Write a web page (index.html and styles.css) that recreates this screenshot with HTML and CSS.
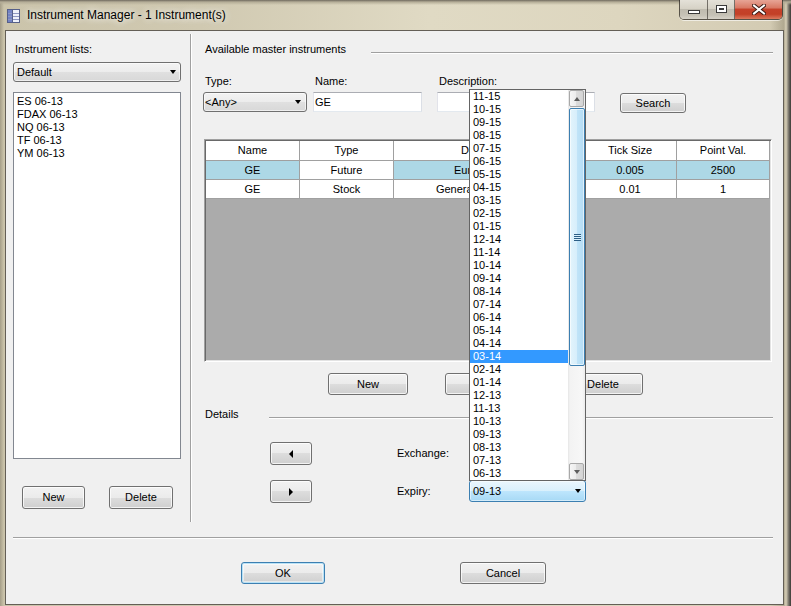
FILE: index.html
```html
<!DOCTYPE html>
<html>
<head>
<meta charset="utf-8">
<title>Instrument Manager</title>
<link rel="stylesheet" href="styles.css">
</head>
<body>
<div class="window">
  <div class="titlebar">
    <svg class="appicon" width="13" height="14" viewBox="0 0 13 14">
      <rect x="0.5" y="0.5" width="12" height="13" fill="#eef1fa" stroke="#56608a"/>
      <rect x="1" y="1" width="4" height="12" fill="#7383c4"/>
      <path d="M1 4.5H12M1 7.5H12M1 10.5H12" stroke="#8d97c2"/>
      <path d="M5.5 1V13" stroke="#56608a"/>
    </svg>
    <span class="title">Instrument Manager - 1 Instrument(s)</span>
    <div class="caption-btns">
      <div class="cbtn cmin">
        <svg width="14" height="6" viewBox="0 0 14 6"><rect x="1.5" y="1.5" width="11" height="3" fill="#fff" stroke="#3a3a3a"/></svg>
      </div>
      <div class="cbtn cmax">
        <svg width="13" height="10" viewBox="0 0 13 10"><rect x="1.5" y="1.5" width="10" height="7" fill="#fff" stroke="#3a3a3a"/><rect x="4" y="4" width="5" height="2" fill="#3a3a3a"/></svg>
      </div>
      <div class="cbtn cclose">
        <svg width="14" height="11" viewBox="0 0 14 11"><path d="M2 1.5L12 9.5M12 1.5L2 9.5" stroke="#3d1a14" stroke-width="4" stroke-linecap="square"/><path d="M2 1.5L12 9.5M12 1.5L2 9.5" stroke="#fff" stroke-width="2" stroke-linecap="square"/></svg>
      </div>
    </div>
  </div>

  <div class="client">
    <div class="main">
      <div class="left">
        <div class="label">Instrument lists:</div>
        <div class="combo combo-default"><span>Default</span><i class="arrow"></i></div>
        <div class="listbox">
          <div class="li">ES 06-13</div>
          <div class="li">FDAX 06-13</div>
          <div class="li">NQ 06-13</div>
          <div class="li">TF 06-13</div>
          <div class="li">YM 06-13</div>
        </div>
        <div class="left-btns">
          <button class="btn b-lnew">New</button>
          <button class="btn b-ldel">Delete</button>
        </div>
      </div>
      <div class="vsep"></div>
      <div class="right">
        <div class="ghead"><span class="gtitle">Available master instruments</span><span class="gline"></span></div>
        <div class="form">
          <div class="fcol c-type">
            <div class="flabel">Type:</div>
            <div class="combo combo-type"><span>&lt;Any&gt;</span><i class="arrow"></i></div>
          </div>
          <div class="fcol c-name">
            <div class="flabel">Name:</div>
            <div class="textbox">GE</div>
          </div>
          <div class="fcol c-desc">
            <div class="flabel">Description:</div>
            <div class="textbox"></div>
          </div>
          <button class="btn b-search">Search</button>
        </div>

        <div class="grid">
          <div class="grow ghdr">
            <div class="cell">Name</div>
            <div class="cell">Type</div>
            <div class="cell">Description</div>
            <div class="cell">Tick Size</div>
            <div class="cell">Point Val.</div>
          </div>
          <div class="grow">
            <div class="cell hl">GE</div>
            <div class="cell">Future</div>
            <div class="cell hl">Eurodollar Fut</div>
            <div class="cell hl">0.005</div>
            <div class="cell hl">2500</div>
          </div>
          <div class="grow">
            <div class="cell">GE</div>
            <div class="cell">Stock</div>
            <div class="cell">General Electric Corp</div>
            <div class="cell">0.01</div>
            <div class="cell">1</div>
          </div>
        </div>

        <div class="gbtns">
          <button class="btn b-g">New</button>
          <button class="btn b-g">Edit</button>
          <button class="btn b-g b-gdel">Delete</button>
        </div>

        <div class="ghead dhead"><span class="gtitle dtitle">Details</span><span class="gline"></span></div>
        <div class="details">
          <button class="btn b-arrow"><i class="tri-left"></i></button>
          <div class="dlabel">Exchange:</div>
          <div class="combo combo-exch"><span></span><i class="arrow"></i></div>
          <button class="btn b-arrow"><i class="tri-right"></i></button>
          <div class="dlabel">Expiry:</div>
          <div class="combo combo-focus"><span>09-13</span><i class="arrow"></i></div>
        </div>
      </div>
    </div>
    <div class="hsep"></div>
    <div class="footer">
      <button class="btn b-ok">OK</button>
      <button class="btn b-cancel">Cancel</button>
    </div>
  </div>

  <div class="dropdown">
    <div class="ddlist">
      <div class="ddi">11-15</div>
      <div class="ddi">10-15</div>
      <div class="ddi">09-15</div>
      <div class="ddi">08-15</div>
      <div class="ddi">07-15</div>
      <div class="ddi">06-15</div>
      <div class="ddi">05-15</div>
      <div class="ddi">04-15</div>
      <div class="ddi">03-15</div>
      <div class="ddi">02-15</div>
      <div class="ddi">01-15</div>
      <div class="ddi">12-14</div>
      <div class="ddi">11-14</div>
      <div class="ddi">10-14</div>
      <div class="ddi">09-14</div>
      <div class="ddi">08-14</div>
      <div class="ddi">07-14</div>
      <div class="ddi">06-14</div>
      <div class="ddi">05-14</div>
      <div class="ddi">04-14</div>
      <div class="ddi on">03-14</div>
      <div class="ddi">02-14</div>
      <div class="ddi">01-14</div>
      <div class="ddi">12-13</div>
      <div class="ddi">11-13</div>
      <div class="ddi">10-13</div>
      <div class="ddi">09-13</div>
      <div class="ddi">08-13</div>
      <div class="ddi">07-13</div>
      <div class="ddi">06-13</div>
    </div>
    <div class="ddscroll">
      <div class="sbtn"><i class="sup"></i></div>
      <div class="thumb"><i class="grip"></i></div>
      <div class="strack"></div>
      <div class="sbtn"><i class="sdown"></i></div>
    </div>
  </div>
</div>
</body>
</html>
```

FILE: styles.css
```css
* { box-sizing: border-box; }

body {
  margin: 0;
  width: 791px;
  height: 606px;
  overflow: hidden;
  background: #c9c2a9;
  font-family: "Liberation Sans", Arial, sans-serif;
  font-size: 11px;
  color: #000;
}

/* shared controls */
.btn {
  padding: 0;
  font-family: "Liberation Sans", Arial, sans-serif;
  font-size: 11px;
  color: #000;
  border: 1px solid #707070;
  border-radius: 3px;
  background: linear-gradient(#f2f2f2 0%, #ebebeb 50%, #dddddd 50%, #cfcfcf 100%);
  box-shadow: inset 0 0 0 1px rgba(255,255,255,0.75);
  display: flex;
  align-items: center;
  justify-content: center;
  line-height: 13px;
}
.combo {
  height: 20px;
  border: 1px solid #707070;
  border-radius: 3px;
  background: linear-gradient(#f3f3f3 0%, #ececec 50%, #e0e0e0 50%, #d8d8d8 100%);
  box-shadow: inset 0 0 0 1px rgba(255,255,255,0.6);
  display: flex;
  align-items: center;
  padding-left: 3px;
  white-space: nowrap;
}
.arrow {
  margin-left: auto;
  margin-right: 4px;
  width: 0;
  height: 0;
  border-left: 3.5px solid transparent;
  border-right: 3.5px solid transparent;
  border-top: 4px solid #000;
}
.textbox {
  height: 20px;
  border: 1px solid;
  border-color: #abadb3 #dbdfe6 #e3e9ef #e2e3ea;
  background: #fff;
  padding-left: 1px;
  line-height: 18px;
}

.window {
  position: relative;
  width: 791px;
  height: 606px;
  display: flex;
  flex-direction: column;
  background:
    linear-gradient(#6f6a5e 0, #b4ad97 2px, rgba(0,0,0,0) 5px),
    linear-gradient(90deg, #a59e88 0, #cbc4ab 4px, #d0c9b1 200px, #e0dac4 430px, #ddd6bf 620px, #d3cbb3 770px, #b0a890 784px, #d8d0b8 786px, #6e6a62 789px, #3c3a36 791px);
}

/* ---------- title bar ---------- */
.titlebar {
  height: 30px;
  display: flex;
  align-items: flex-start;
  padding: 0 8px 0 7px;
  flex-shrink: 0;
}
.appicon { margin-top: 9px; flex-shrink: 0; }
.title {
  margin-left: 7px;
  margin-top: 8px;
  font-size: 12px;
  line-height: 14px;
  white-space: nowrap;
  color: #000;
  text-shadow: 0 0 6px rgba(255,255,255,0.9), 0 0 10px rgba(255,255,255,0.7);
}
.caption-btns {
  margin-left: auto;
  display: flex;
  height: 20px;
  border: 1px solid rgba(45,40,35,0.75);
  border-top: none;
  border-radius: 0 0 5px 5px;
  overflow: hidden;
  box-shadow: 0 1px 0 rgba(255,255,255,0.6);
}
.cbtn {
  height: 19px;
  display: flex;
  align-items: center;
  justify-content: center;
}
.cmin, .cmax {
  background: linear-gradient(#e4e1d8 0%, #d6d2c6 45%, #bfbbaf 50%, #c6c2b6 80%, #d6d2c8 100%);
  border-right: 1px solid rgba(45,40,35,0.6);
}
.cmin { width: 28px; padding-top: 5px; }
.cmax { width: 27px; padding-bottom: 1px; }
.cclose {
  width: 47px;
  background: linear-gradient(#e7a496 0%, #d97a66 40%, #c5412a 50%, #c34027 75%, #dc7a5e 100%);
}

/* ---------- client area ---------- */
.client {
  margin: 0 7px 0 5px;
  height: 575px;
  border: 1px solid #645f56;
  background: #f0f0f0;
  display: flex;
  flex-direction: column;
}
.main {
  margin-top: 3px;
  height: 488px;
  display: flex;
  flex-shrink: 0;
}

/* left panel */
.left {
  width: 184px;
  flex-shrink: 0;
  padding: 9px 0 0 7px;
  display: flex;
  flex-direction: column;
}
.label { height: 13px; line-height: 13px; padding-left: 2px; }
.combo-default { margin-top: 6px; width: 168px; }
.listbox {
  margin-top: 10px;
  width: 168px;
  height: 367px;
  border: 1px solid #828790;
  background: #fff;
  padding: 2px 0 0 3px;
}
.li { height: 13px; line-height: 13px; white-space: nowrap; }
.left-btns {
  margin-top: 27px;
  display: flex;
  padding-left: 9px;
  gap: 24px;
}
.b-lnew { width: 63px; height: 23px; }
.b-ldel { width: 64px; height: 23px; }

.vsep {
  width: 2px;
  flex-shrink: 0;
  border-left: 1px solid #a0a0a0;
  border-right: 1px solid #fff;
}

/* right panel */
.right {
  flex: 1;
  padding: 9px 10px 0 13px;
  display: flex;
  flex-direction: column;
}
.ghead { display: flex; height: 13px; line-height: 13px; flex-shrink: 0; }
.gtitle { width: 166px; flex-shrink: 0; white-space: nowrap; }
.dtitle { width: 64px; }
.gline {
  flex: 1;
  height: 2px;
  margin-top: 9px;
  border-top: 1px solid #a0a0a0;
  border-bottom: 1px solid #fff;
}

.form {
  margin-top: 19px;
  margin-left: -2px;
  height: 37px;
  flex-shrink: 0;
  display: flex;
  align-items: flex-start;
}
.fcol { display: flex; flex-direction: column; }
.flabel { height: 13px; line-height: 13px; padding-left: 2px; margin-bottom: 4px; white-space: nowrap; }
.c-type { width: 104px; }
.c-name { width: 109px; margin-left: 6px; }
.c-desc { width: 158px; margin-left: 15px; }
.b-search { margin-left: 25px; margin-top: 18px; width: 66px; height: 20px; }
.combo-type { padding-left: 1px; }
.combo-type .arrow { margin-right: 5px; }

/* data grid */
.grid {
  margin-top: 27px;
  margin-left: -1px;
  width: 568px;
  height: 223px;
  flex-shrink: 0;
  border: 1px solid;
  border-color: #a0a0a0 #ffffff #ffffff #a0a0a0;
  box-shadow: inset 1px 1px 0 #696969, inset -1px -1px 0 #e3e3e3;
  background: #ababab;
  padding: 1px;
}
.grow {
  display: grid;
  grid-template-columns: 94px 94px 190px 93px 93px;
  height: 19px;
}
.ghdr { height: 20px; }
.cell {
  background: #fff;
  border-right: 1px solid #a0a0a0;
  border-bottom: 1px solid #a0a0a0;
  text-align: center;
  line-height: 18px;
  white-space: nowrap;
  overflow: hidden;
}
.ghdr .cell { line-height: 19px; }
.cell.hl { background: #add8e6; }

.gbtns {
  margin-top: 11px;
  display: flex;
  padding-left: 123px;
}
.b-g { width: 80px; height: 22px; margin-right: 37px; }
.b-gdel { margin-left: 1px; }

.dhead { margin-top: 13px; }
.details {
  margin-top: 21px;
  margin-left: 65px;
  display: grid;
  grid-template-columns: 42px 157px 117px;
  grid-template-rows: 23px 23px;
  row-gap: 15px;
  align-items: center;
}
.b-arrow { width: 42px; height: 23px; }
.dlabel { padding-left: 85px; line-height: 13px; }
.combo-exch { height: 22px; align-self: start; margin-top: 1px; }
.combo-focus {
  height: 22px;
  align-self: start;
  border-color: #3c7fb1;
  background: linear-gradient(#eaf6fd 0%, #d9f0fc 50%, #bee6fd 50%, #a7d9f5 100%);
  box-shadow: inset 0 0 0 1px rgba(255,255,255,0.5);
}
.tri-left {
  width: 0; height: 0;
  border-top: 4px solid transparent;
  border-bottom: 4px solid transparent;
  border-right: 4px solid #000;
}
.tri-right {
  width: 0; height: 0;
  border-top: 4px solid transparent;
  border-bottom: 4px solid transparent;
  border-left: 4px solid #000;
}

/* footer */
.hsep {
  margin-top: 15px;
  margin-left: 7px;
  width: 760px;
  height: 2px;
  border-top: 1px solid #a0a0a0;
  border-bottom: 1px solid #fff;
  flex-shrink: 0;
}
.footer {
  margin-top: 23px;
  padding-left: 235px;
  display: flex;
  gap: 135px;
}
.b-ok {
  width: 84px;
  height: 22px;
  border-color: #3c7fb1;
  box-shadow: inset 0 0 0 1px #b9e2f6, inset 0 0 0 2px rgba(255,255,255,0.5);
}
.b-cancel { width: 86px; height: 22px; }

/* open dropdown list (overlays the form) */
.dropdown {
  position: absolute;
  left: 469px;
  top: 89px;
  width: 117px;
  height: 392px;
  border: 1px solid #646464;
  background: #fff;
  display: flex;
}
.ddlist { width: 98px; flex-shrink: 0; }
.ddi {
  height: 13px;
  line-height: 13px;
  padding-left: 3px;
  white-space: nowrap;
}
.ddi.on { background: #3399ff; color: #fff; }
.ddscroll {
  width: 17px;
  display: flex;
  flex-direction: column;
  background: linear-gradient(90deg, #e6e6e6 0, #f3f3f3 2px, #f7f7f7 14px, #ececec 17px);
}
.sbtn {
  height: 17px;
  margin: 0 1px;
  border: 1px solid #a8a8a8;
  border-radius: 2px;
  background: linear-gradient(90deg, #f6f6f6 0%, #ebebeb 50%, #dcdcdc 50%, #d4d4d4 100%);
  display: flex;
  align-items: center;
  justify-content: center;
  flex-shrink: 0;
}
.sup {
  width: 0; height: 0;
  border-left: 3.5px solid transparent;
  border-right: 3.5px solid transparent;
  border-bottom: 4px solid #5d5d5d;
}
.sdown {
  width: 0; height: 0;
  border-left: 3.5px solid transparent;
  border-right: 3.5px solid transparent;
  border-top: 4px solid #5d5d5d;
}
.thumb {
  margin: 1px 0 0 1px;
  height: 258px;
  border: 1px solid #3c7fb1;
  border-radius: 2px;
  background: linear-gradient(90deg, #e3f4fc 0%, #d6eefb 50%, #c1e4f8 50%, #b3dcf5 100%);
  box-shadow: inset 0 0 0 1px rgba(255,255,255,0.6);
  display: flex;
  align-items: center;
  justify-content: center;
  flex-shrink: 0;
}
.grip {
  width: 7px;
  height: 7px;
  background: repeating-linear-gradient(#2d5f86 0, #2d5f86 1px, #d8f0fc 1px, #d8f0fc 2px);
}
.strack { flex: 1; }
```
